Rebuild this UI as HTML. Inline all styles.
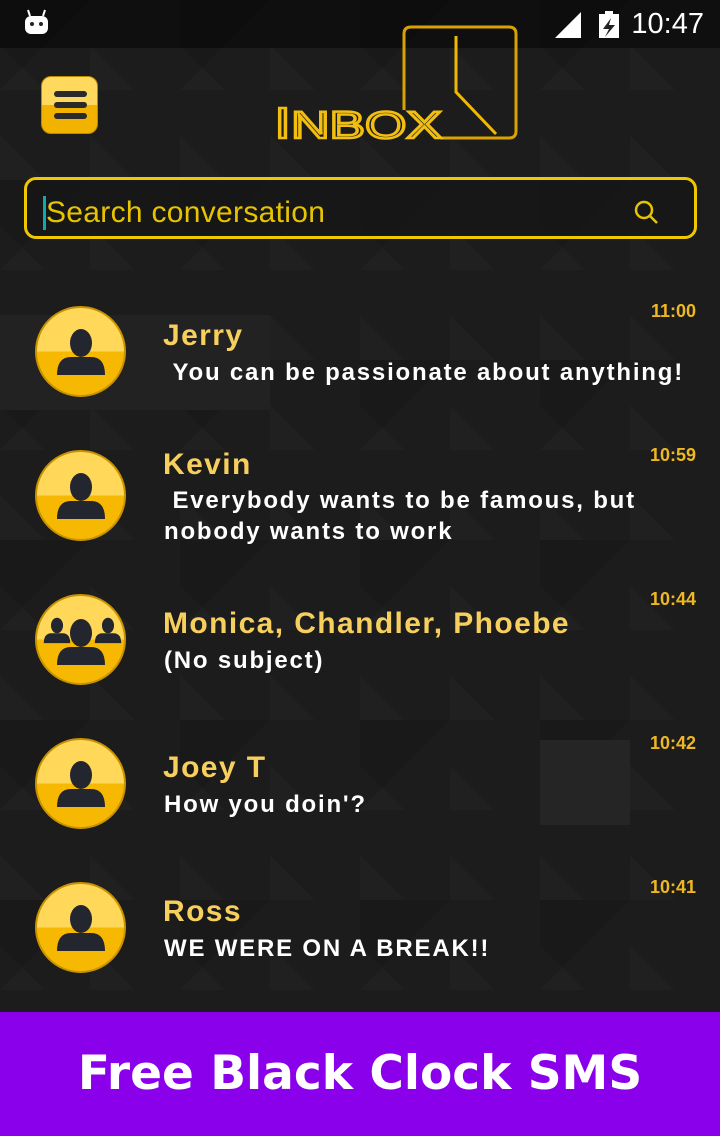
<!DOCTYPE html>
<html><head><meta charset="utf-8"><style>
*{margin:0;padding:0;box-sizing:border-box}
body{width:720px;height:1136px;overflow:hidden;background:#1b1b1b;font-family:"Liberation Sans",sans-serif;position:relative}
.bg{position:absolute;left:0;top:0;width:720px;height:1012px;background:
linear-gradient(135deg,rgba(0,0,0,.12) 25%,transparent 25%) 0 0/180px 180px,
linear-gradient(45deg,rgba(255,255,255,.02) 25%,transparent 25%) 0 0/90px 90px,#1c1c1c}
.sq{position:absolute;background:#262626}
.sb{position:absolute;top:0;left:0;width:720px;height:48px;background:rgba(0,0,0,.45)}
.time{position:absolute;right:16px;top:8px;color:#fff;font-size:29px}
.menu{position:absolute;left:41px;top:76px;width:57px;height:58px;border-radius:10px;background:linear-gradient(#ffd95e 0 50%,#f2b300 50%);border:1px solid #b88a00}
.menu i{position:absolute;left:12px;width:33px;height:6px;border-radius:3px;background:#2a2a2a}
.search{position:absolute;left:24px;top:177px;width:673px;height:62px;border:3px solid #f0c800;border-radius:12px;background:rgba(20,20,20,.6)}
.search span{position:absolute;left:16px;top:16px;font-size:30px;color:#e8c400;border-left:3px solid #1aa;letter-spacing:.3px}
.row{position:absolute;left:0;width:720px;height:144px}
.av{position:absolute;left:35px;top:2px;width:91px;height:91px;border-radius:50%;background:linear-gradient(#ffd85a 0 50%,#f6b800 50%);border:2px solid #c99200}
.nm{position:absolute;left:163px;color:#f7cf5c;font-weight:bold;font-size:30px;letter-spacing:1.4px}
.msg{position:absolute;left:164px;color:#fff;font-weight:bold;font-size:24px;line-height:31px;letter-spacing:1.8px}
.tm{position:absolute;right:24px;top:-3px;color:#eeb822;font-weight:bold;font-size:18px}
.banner{position:absolute;left:0;top:1012px;width:720px;height:124px;background:#8a00ea;color:#fff;font-weight:bold;font-size:47px;text-align:center;line-height:124px;font-family:"DejaVu Sans","Liberation Sans",sans-serif}
</style></head><body>
<div class="bg"></div>
<div class="sq" style="left:0;top:315px;width:270px;height:95px;background:#222"></div>
<div class="sq" style="left:540px;top:740px;width:90px;height:85px;background:#252525"></div>
<div class="sb"></div>
<svg style="position:absolute;left:24px;top:8px" width="26" height="28"><rect x="1" y="8" width="23" height="18" rx="6" fill="#fff"/><line x1="6" y1="8" x2="4" y2="2" stroke="#fff" stroke-width="2"/><line x1="19" y1="8" x2="21" y2="2" stroke="#fff" stroke-width="2"/><circle cx="8" cy="16" r="2" fill="#222"/><circle cx="17" cy="16" r="2" fill="#222"/></svg>
<svg style="position:absolute;left:555px;top:10px" width="70" height="30"><polygon points="0,28 26,28 26,2" fill="#fff"/><rect x="44" y="4" width="20" height="24" fill="#fff"/><rect x="50" y="1" width="8" height="4" fill="#fff"/><polygon points="56,8 48,19 54,19 50,27 60,15 54,15" fill="#222"/></svg>
<div class="time">10:47</div>
<div class="menu"><i style="top:14px"></i><i style="top:25px"></i><i style="top:36px"></i></div>
<svg style="position:absolute;left:270px;top:24px" width="250" height="120">
<path d="M134 86 V10 Q134 3 141 3 H239 Q246 3 246 10 V107 Q246 114 239 114 H170" fill="none" stroke="#d9a200" stroke-width="3"/>
<path d="M186 22 V78 L226 120" fill="none" stroke="#f0b800" stroke-width="3" transform="translate(0,-10)"/>
<text x="4" y="114" font-family="Liberation Sans" font-size="44" fill="none" stroke="#f2bf10" stroke-width="2.5" textLength="168" lengthAdjust="spacingAndGlyphs">I<tspan font-size="38">NBOX</tspan></text>
</svg>
<div class="search"><span>Search conversation</span>
<svg style="position:absolute;right:34px;top:20px" width="26" height="26"><circle cx="10" cy="10" r="8" fill="none" stroke="#e8c400" stroke-width="2.5"/><line x1="16" y1="16" x2="23" y2="23" stroke="#e8c400" stroke-width="2.5"/></svg></div>

<svg width="0" height="0" style="position:absolute"><defs><g id="p"><ellipse cx="0" cy="-10" rx="11" ry="14" fill="#23262e"/><path d="M-24 22 Q-24 4 -10 4 H10 Q24 4 24 22 Z" fill="#23262e"/></g></defs></svg>

<div class="row" style="top:304px"><div class="av"><svg width="91" height="91"><use href="#p" x="44" y="45"/></svg></div><div class="tm">11:00</div><div class="nm" style="top:15px">Jerry</div><div class="msg" style="top:53px">&nbsp;You can be passionate about anything!</div></div>
<div class="row" style="top:448px"><div class="av"><svg width="91" height="91"><use href="#p" x="44" y="45"/></svg></div><div class="tm">10:59</div><div class="nm" style="top:0">Kevin</div><div class="msg" style="top:37px">&nbsp;Everybody wants to be famous, but<br>nobody wants to work</div></div>
<div class="row" style="top:592px"><div class="av"><svg width="91" height="91"><g transform="translate(20,35) scale(.55)"><use href="#p"/></g><g transform="translate(71,35) scale(.55)"><use href="#p"/></g><use href="#p" x="44" y="47"/></svg></div><div class="tm">10:44</div><div class="nm" style="top:15px">Monica, Chandler, Phoebe</div><div class="msg" style="top:53px">(No subject)</div></div>
<div class="row" style="top:736px"><div class="av"><svg width="91" height="91"><use href="#p" x="44" y="45"/></svg></div><div class="tm">10:42</div><div class="nm" style="top:15px">Joey T</div><div class="msg" style="top:53px">How you doin'?</div></div>
<div class="row" style="top:880px"><div class="av"><svg width="91" height="91"><use href="#p" x="44" y="45"/></svg></div><div class="tm">10:41</div><div class="nm" style="top:15px">Ross</div><div class="msg" style="top:53px">WE WERE ON A BREAK!!</div></div>

<div class="banner">Free Black Clock SMS</div>
</body></html>
